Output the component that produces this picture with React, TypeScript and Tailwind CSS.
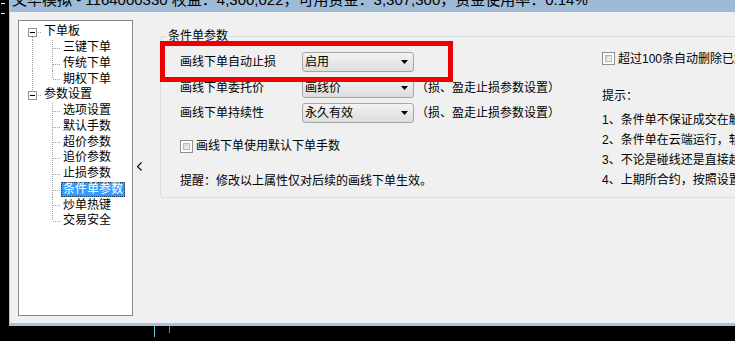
import React from 'react';

// 树形菜单数据
interface TreeItem {
  text: string;
  root?: boolean;
  up?: boolean;
  down?: boolean;
  cont?: boolean;
  last?: boolean;
  selected?: boolean;
}

const treeItems: TreeItem[] = [
  { text: '下单板', root: true, down: true },
  { text: '三键下单', cont: true },
  { text: '传统下单', cont: true },
  { text: '期权下单', cont: true, last: true },
  { text: '参数设置', root: true, up: true },
  { text: '选项设置' },
  { text: '默认手数' },
  { text: '超价参数' },
  { text: '追价参数' },
  { text: '止损参数' },
  { text: '条件单参数', selected: true },
  { text: '炒单热键' },
  { text: '交易安全', last: true },
];

const tips = [
  '1、条件单不保证成交在触发价格',
  '2、条件单在云端运行，软件关闭后依然有效',
  '3、不论是碰线还是直接越过触发价格都会触发',
  '4、上期所合约，按照设置的平今平昨顺序平仓',
];

const dot = { stroke: '#a0a0a0', strokeDasharray: '1 1' };

const TreeRow = ({ item }: { item: TreeItem }) => {
  if (item.root) {
    return (
      <div className="flex h-[15.75px] items-center">
        <svg width="23" height="15.75" viewBox="0 0 23 15.75" className="shrink-0">
          {item.up && <line x1="13.5" y1="0" x2="13.5" y2="4" {...dot} />}
          {item.down && <line x1="13.5" y1="13" x2="13.5" y2="15.75" {...dot} />}
          <line x1="19" y1="8.5" x2="23" y2="8.5" {...dot} />
          <rect x="9.5" y="4.5" width="8" height="8" fill="#fff" stroke="#919191" />
          <line x1="11" y1="8.5" x2="16" y2="8.5" stroke="#000" />
        </svg>
        <span className="border border-transparent px-[1px] leading-[13px]">{item.text}</span>
      </div>
    );
  }
  return (
    <div className="flex h-[15.75px] items-center">
      <svg width="42" height="15.75" viewBox="0 0 42 15.75" className="shrink-0">
        {item.cont && <line x1="13.5" y1="0" x2="13.5" y2="15.75" {...dot} />}
        <line x1="33.5" y1="0" x2="33.5" y2={item.last ? 8 : 15.75} {...dot} />
        <line x1="34" y1="8.5" x2="42" y2="8.5" {...dot} />
      </svg>
      <span
        className={
          item.selected
            ? 'border border-dotted border-[#1c3a5c] bg-[#3399ff] px-[1px] leading-[13px] text-white'
            : 'border border-transparent px-[1px] leading-[13px]'
        }
      >
        {item.text}
      </span>
    </div>
  );
};

const Select = ({ value }: { value: string }) => (
  <div className="flex h-[20px] w-[112px] shrink-0 items-center justify-between rounded-[3px] border border-[#a5a5a5] bg-linear-to-b from-[#f3f3f3] to-[#dddddd] pl-[2px] pr-[5px]">
    <span className="leading-[14px]">{value}</span>
    <svg width="7" height="4" viewBox="0 0 7 4">
      <path d="M0 0h7L3.5 4z" fill="#000" />
    </svg>
  </div>
);

const CheckBox = () => (
  <div className="h-[13px] w-[13px] shrink-0 border border-[#8e8f8f] bg-white p-[2px]">
    <div className="h-full w-full border border-[#b8b8b8] bg-linear-to-br from-[#d6d6d6] to-[#f6f6f6]" />
  </div>
);

const App = () => {
  return (
    <div className="relative flex h-[341px] w-[735px] overflow-hidden bg-black font-['Liberation_Sans','Noto_Sans_CJK_SC',sans-serif] text-[12px] text-black">
      {/* 左侧黑边 */}
      <div className="flex w-[9px] shrink-0 flex-col gap-[9px] pl-[1px] pt-[3px]">
        <div className="h-[1px] w-[4px] bg-white" />
        <div className="h-[1px] w-[4px] bg-white" />
      </div>

      {/* 主窗口 */}
      <div className="flex w-[780px] shrink-0 flex-col">
        <div className="flex h-[326px] flex-col border-b-[3px] border-l-[1px] border-[#a9c1dc]">
          {/* 标题栏 */}
          <div className="h-[12px] overflow-hidden bg-[#9dbad6] pl-[2px]">
            <div className="mt-[-9px] whitespace-nowrap text-[15px] leading-[17px] text-black">
              文华模拟 - 1164000330  权益：4,300,022，可用资金：3,307,300，资金使用率：0.14%
            </div>
          </div>

          <div className="flex flex-1 items-start bg-[#f0f0f0]">
            {/* 树 */}
            <div className="ml-[8px] mt-[8px] h-[296px] w-[115px] shrink-0 border border-[#828790] bg-white pt-[3px]">
              {treeItems.map((item) => (
                <TreeRow key={item.text} item={item} />
              ))}
            </div>

            {/* 折叠箭头 */}
            <div className="w-[27px] shrink-0 pl-[3px] pt-[150px]">
              <svg width="7" height="9" viewBox="0 0 7 9">
                <path d="M5.5 0.5L1.5 4.5L5.5 8.5" fill="none" stroke="#000" strokeWidth="1.1" />
              </svg>
            </div>

            {/* 条件单参数 */}
            <fieldset className="mt-[18px] h-[168px] flex-1 rounded-[3px] border border-[#d5dfe5]">
              <legend className="ml-[6px] px-[1px] leading-[13px]">条件单参数</legend>
              <div className="flex">
                <div className="flex w-[441px] shrink-0 flex-col pl-[19px] pt-[9px]">
                  <div className="flex h-[20px] items-center">
                    <span className="w-[122px]">画线下单自动止损</span>
                    <Select value="启用" />
                  </div>
                  <div className="mt-[6px] flex h-[20px] items-center">
                    <span className="w-[122px]">画线下单委托价</span>
                    <Select value="画线价" />
                    <span className="ml-[2px]">（损、盈走止损参数设置）</span>
                  </div>
                  <div className="mt-[5px] flex h-[20px] items-center">
                    <span className="w-[122px]">画线下单持续性</span>
                    <Select value="永久有效" />
                    <span className="ml-[2px]">（损、盈走止损参数设置）</span>
                  </div>
                  <div className="mt-[16px] flex h-[14px] items-center gap-[3px]">
                    <CheckBox />
                    <span>画线下单使用默认下单手数</span>
                  </div>
                  <div className="mt-[21px] h-[14px] leading-[14px]">提醒：修改以上属性仅对后续的画线下单生效。</div>
                </div>

                <div className="flex flex-1 flex-col overflow-hidden whitespace-nowrap pt-[9px]">
                  <div className="flex h-[13px] items-center gap-[3px]">
                    <CheckBox />
                    <span>超过100条自动删除已触发条件单</span>
                  </div>
                  <div className="mt-[21px] leading-[20px]">提示：</div>
                  <div className="mt-[4px] flex flex-col">
                    {tips.map((t) => (
                      <div key={t} className="leading-[20px]">
                        {t}
                      </div>
                    ))}
                  </div>
                </div>
              </div>
            </fieldset>
          </div>
        </div>

        {/* 底部黑色区域 */}
        <div className="flex items-start pl-[145px]">
          <div className="h-[11px] w-[1px] bg-[#5fc9d6]" />
          <div className="ml-[14px] h-[7px] w-[1px] bg-[#e05060]" />
        </div>
      </div>

      {/* 红色标注框 */}
      <div className="pointer-events-none absolute left-[160px] top-[41px] h-[41px] w-[293px] border-[5px] border-[#ee0000]" />
    </div>
  );
};

export default App;
